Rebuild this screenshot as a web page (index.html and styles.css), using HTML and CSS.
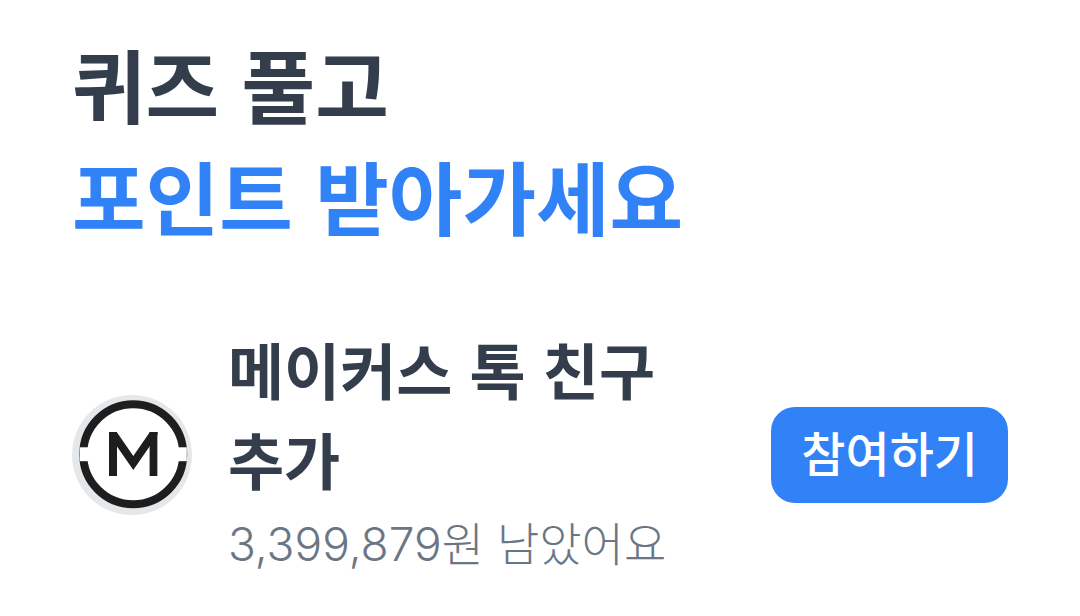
FILE: index.html
```html
<!DOCTYPE html>
<html lang="ko">
<head>
<meta charset="utf-8">
<meta name="viewport" content="width=device-width, initial-scale=1">
<title>퀴즈 풀고 포인트 받아가세요</title>
<link rel="stylesheet" href="styles.css">
</head>
<body>
<main class="quiz">
  <h1 class="title">퀴즈 풀고<br><span class="accent">포인트 받아가세요</span></h1>
  <section class="offer">
    <svg class="logo" viewBox="0 0 120 120" role="img" aria-label="Makers">
      <clipPath id="mark"><rect x="37" y="37" width="48.6" height="44"/></clipPath>
      <circle cx="60" cy="60" r="60" fill="#e5e8eb"/>
      <circle cx="61.2" cy="59.3" r="53.6" fill="#fff"/>
      <circle cx="61.2" cy="59.3" r="50" fill="none" stroke="#1e1e1e" stroke-width="8"/>
      <rect x="7.6" y="52.3" width="107.2" height="13.9" fill="#fff"/>
      <g clip-path="url(#mark)" fill="none" stroke="#1e1e1e" stroke-width="8">
        <path d="M41 81V37M81.6 81V37"/>
        <path d="M35 30L61.3 68L87.6 30"/>
      </g>
    </svg>
    <div class="info">
      <h2 class="name">메이커스 톡 친구 추가</h2>
      <p class="left">3,399,879원 남았어요</p>
    </div>
    <button class="join" type="button">참여하기</button>
  </section>
</main>
</body>
</html>
```

FILE: styles.css
```css
* { box-sizing: border-box; }
body {
  margin: 0;
  background: #fff;
  color: #333d4b;
  font-family: "Noto Sans CJK KR", sans-serif;
}
.quiz { padding: 26px 72px; }
.title {
  margin: 0 0 74px;
  font-size: 80px;
  line-height: 112px;
  font-weight: 700;
}
.accent { color: #3182f6; }
.offer { display: flex; align-items: center; }
.logo { flex: none; width: 120px; height: 120px; margin-right: 36px; }
.info { flex: 1; min-width: 0; padding: 0 72px 6px 0; }
.name {
  margin: 0;
  font-size: 61px;
  line-height: 90px;
  font-weight: 700;
  word-break: keep-all;
}
.left {
  margin: 4px 0 0;
  color: #6b7684;
  font-family: Inter, "Noto Sans CJK KR", sans-serif;
  font-size: 46px;
  font-weight: 300;
  line-height: 72px;
  white-space: nowrap;
}
.join {
  flex: none;
  height: 96px;
  padding: 0 30px 8px;
  border: 0;
  border-radius: 24px;
  background: #3182f6;
  color: #fff;
  font: 500 48px/72px "Noto Sans CJK KR", sans-serif;
}
```
